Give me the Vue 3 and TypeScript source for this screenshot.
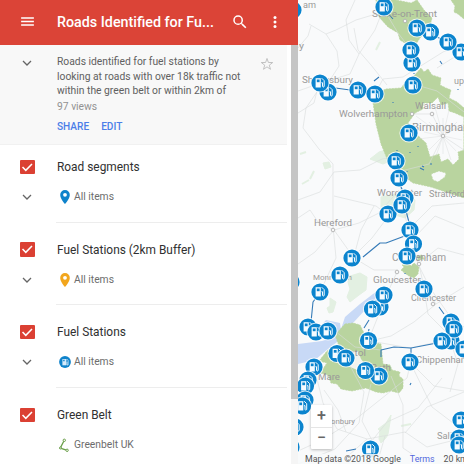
<script setup lang="ts">
interface Layer {
  title: string
  item: string
  icon: 'pin' | 'fuel' | 'line'
  color: string
}

interface Label {
  text: string
  x: number
  y: number
  width: number
  size: number
}

const layers: Layer[] = [
  { title: 'Road segments', item: 'All items', icon: 'pin', color: '#0f83cb' },
  { title: 'Fuel Stations (2km Buffer)', item: 'All items', icon: 'pin', color: '#f2a61d' },
  { title: 'Fuel Stations', item: 'All items', icon: 'fuel', color: '#0f83cb' },
  { title: 'Green Belt', item: 'Greenbelt UK', icon: 'line', color: '#6a9f49' },
]

const labels: Label[] = [
  { text: 'am', x: 303, y: 8, width: 13, size: 9 },
  { text: 'Stoke-on-Trent', x: 372, y: 17, width: 65, size: 9.5 },
  { text: 'y', x: 299, y: 49, width: 5, size: 9 },
  { text: 'Shrewsbury', x: 302, y: 83, width: 51, size: 9.5 },
  { text: 'Walsall', x: 415, y: 109, width: 31, size: 9.5 },
  { text: 'up', x: 454, y: 84, width: 10, size: 9 },
  { text: 'Wolverhampton', x: 339, y: 117, width: 69, size: 9.5 },
  { text: 'Birmingham', x: 412, y: 131, width: 61, size: 11.5 },
  { text: 'Worcester', x: 377, y: 196, width: 45, size: 9.7 },
  { text: 'Stratford', x: 429, y: 197, width: 36, size: 9 },
  { text: 'Hereford', x: 314, y: 226, width: 38, size: 9.5 },
  { text: 'Cheltenham', x: 392, y: 261, width: 54, size: 10 },
  { text: 'Gloucester', x: 373, y: 283, width: 48, size: 9.8 },
  { text: 'Monmouth', x: 313, y: 280, width: 39, size: 8 },
  { text: 'Cirencester', x: 411, y: 301, width: 45, size: 8.5 },
  { text: 'Bristol', x: 337, y: 356, width: 29, size: 9.5 },
  { text: 'Bath', x: 371, y: 371, width: 20, size: 9.5 },
  { text: 'Mare', x: 318, y: 380, width: 22, size: 9.2 },
  { text: 'Chippenham', x: 416, y: 363, width: 53, size: 9.2 },
  { text: 'onbury', x: 331, y: 424, width: 24, size: 7.8 },
  { text: 'Salisbury', x: 437, y: 439, width: 38, size: 9.5 },
]

const towns: [number, number][] = [
  [405, 21], [412, 114], [432, 114], [443, 136], [333, 230], [419, 264],
  [397, 272], [433, 304],
]

const stations: [number, number][] = [
  [293, 10], [384, 7], [430.5, 32], [417, 28], [461, 52], [448, 42], [412, 63], [411, 50],
  [413, 85], [328, 92], [320, 83], [358, 90], [375, 94], [409, 133], [396, 161],
  [399, 178], [405, 198], [388, 214], [402, 205], [410, 230], [413.5, 244], [407, 256],
  [352, 258], [340, 275], [320, 292], [424, 289], [380, 307], [384, 295], [372.5, 309],
  [291, 282], [308, 327], [316, 332], [328, 331], [451, 322], [451, 341], [454, 329],
  [442, 341], [464, 349], [368.5, 340.5], [337, 353.5], [346, 358], [410, 362], [314, 367],
  [379, 376], [365.5, 370.5], [308, 380], [305.5, 386], [305, 400], [302.5, 406], [295, 427],
  [291, 447], [370.5, 449], [461, 420], [459, 438], [459, 445],
]

const roads: string[] = [
  'M298 113l16-10 5-20M298 91l23-8 29-9 9-20-10-14-3-20 9-20',
  'M309 24l17 10 10-4 20-10 20-6M326 34l11 17 2 15-11 17',
  'M298 48l10-12 3-10M354 28l4 22 13 15 16 20M359 54l16-24 9-23',
  'M375 94l8-15 20-2 40-25 20-8M383 8l15 25 13 17M437 68l27-17',
  'M321 86l-15 22-3 20 16 21 14 15 0 62 3 32-16 34',
  'M298 200l22-8 14-20M334 172l26-2 22-11 17-3',
  'M334 230l-16-8-8-12-12 8M334 230l25-7 20-10 20-23',
  'M334 230l-19 22-17 12M334 230l20 28 20 12 24 0',
  'M334 196l42 10 12 9M374 206l-13 24-7 26M352 258l20-20 18-24',
  'M399 178l6 38 13 48 12 24 24 34 10 5',
  'M410 228l22-22 32-3M418 264l20-16 26 7M413 239l22-23 29 12',
  'M419 265l5 22 12 17 28-17M436 304l-22 18-23 14-21 5',
  'M397 272l-10 22-18 45-6 10M370 341l40 7 32-7 22 6M325 323l30 24 26 3',
  'M411 361l-4 17-21 17-30 24-36 22-22 10',
  'M346 358l18 34-5 31-24 26-37 15M324 390l14 20 8 22',
  'M314 367l9 36 14 26 30 10 38-7 22 15 32-8',
  'M391 376l12 29 0 43 24 16M410 362l24 24 30 5M410 362l22 45 29 22',
  'M367 439l-28 25M405 433l22-26 37-15M385 436l-8 28',
  'M371 384l-9 37 13 25M442 378l-24 30-31 14-20 25M424 289l4 25 20 20 10 30-8 28',
  'M464 112l-27-21-24-7M411 114l21 0 11 22 21 14M443 136l-14 28-28 7',
]

const cityRoads: string[] = [
  'M443 118v36M424 132l38 8M429 122l27 29M429 150l28-28M416 116l27 20 20-12',
  'M443 136l-8-29M443 136l6-26M443 136l-25 3M443 136l8 24M443 136l-7 20',
]

const routes: string[] = [
  'M321 86l29 4M374 81l5-4M384 9l9 10M417 28l31 14 16 10',
  'M398 179l7 18M405 207l6 23M363 257l17-14 6 0 24-9',
  'M320 292l-7 10-2 20M364 328l5-8M420 280l4 8M439 307l5 7',
  'M381 357l0-7 13-3 17 1 26-5M369 329l-2 10M411 348v14M410 385l1-2M346 451l10-2',
]
</script>

<template>
  <main class="app">
    <section class="panel">
      <header class="toolbar">
        <svg class="menu-icon" viewBox="0 0 24 24"><path d="M3 6h18v2H3zm0 5h18v2H3zm0 5h18v2H3z" /></svg>
        <h1>Roads Identified for Fu...</h1>
        <svg class="search-icon" viewBox="0 0 24 24">
          <path d="M15.5 14h-.79l-.28-.27A6.47 6.47 0 0 0 16 9.5 6.5 6.5 0 1 0 9.5 16c1.61 0 3.09-.59 4.23-1.57l.27.28v.79l5 4.99L20.49 19zm-6 0a4.5 4.5 0 1 1 0-9 4.5 4.5 0 0 1 0 9z" />
        </svg>
        <svg class="more-icon" viewBox="0 0 24 24">
          <circle cx="12" cy="6" r="2" /><circle cx="12" cy="12" r="2" /><circle cx="12" cy="18" r="2" />
        </svg>
      </header>
      <div class="panel-body">
        <div class="content">
          <div class="about">
            <svg class="chevron" viewBox="0 0 10 6"><path d="M1 1l4 4 4-4" /></svg>
            <div class="description">
              <p>Roads identified for fuel stations by<br>looking at roads with over 18k traffic not<br>within the green belt or within 2km of</p>
              <p class="views">97 views</p>
              <div class="actions"><a>SHARE</a><a>EDIT</a></div>
            </div>
            <svg class="star" viewBox="0 0 24 24">
              <path d="M12 2.5l2.4 6.9 7.4.1-5.9 4.5 2.1 7.1-6-4.2-6 4.2 2.1-7.1-5.9-4.5 7.4-.1z" />
            </svg>
          </div>
          <div v-for="layer in layers" :key="layer.title" class="layer">
            <div class="row title-row">
              <span class="checkbox"><svg viewBox="0 0 15 15"><path d="M2.6 7.3l3.4 3.4 6.4-6.5" /></svg></span>
              <h2>{{ layer.title }}</h2>
            </div>
            <div class="row item-row">
              <svg v-if="layer.icon !== 'line'" class="chevron" viewBox="0 0 10 6"><path d="M1 1l4 4 4-4" /></svg>
              <span v-else class="chevron"></span>
              <svg class="item-icon" viewBox="0 0 14 16">
                <path
                  v-if="layer.icon === 'pin'" :fill="layer.color" fill-rule="evenodd"
                  d="M7 1a4.8 4.8 0 0 0-4.8 4.9C2.2 9.5 7 15 7 15s4.8-5.5 4.8-9.1A4.8 4.8 0 0 0 7 1zm0 2.9a1.9 1.9 0 1 1 0 3.8 1.9 1.9 0 0 1 0-3.8z"
                />
                <g v-else-if="layer.icon === 'fuel'">
                  <circle cx="7" cy="8" r="5.9" :fill="layer.color" />
                  <path d="M4.4 5h4v6.3h-4z" fill="#d5eafa" /><path d="M5.2 5.8h1.4v1.5H5.2z" :fill="layer.color" />
                  <path d="M8.7 5l1.4 1.5V11H9V8" fill="none" stroke="#d5eafa" stroke-width=".8" />
                </g>
                <g v-else fill="#fff" :stroke="layer.color">
                  <path d="M6 3.8L2.2 11.1 8.5 13.2" fill="none" stroke-width="1.3" />
                  <circle cx="6.3" cy="3.3" r="1.2" /><circle cx="2.5" cy="11" r="1" /><circle cx="9.1" cy="13.3" r="1.2" />
                </g>
              </svg>
              <span class="item-name">{{ layer.item }}</span>
            </div>
          </div>
        </div>
        <div class="scroll-track"><div class="scroll-thumb"></div></div>
      </div>
    </section>
    <section class="map">
      <svg class="canvas" viewBox="298 0 166 464">
        <defs>
          <g id="station">
            <circle r="9.6" fill="#fff" opacity=".8" />
            <circle r="8.6" fill="#0b84ce" />
            <path d="M-4.4 -4.8h5.2v9.3h-5.2z" fill="#f5fbff" />
            <path d="M-3.2 -3.5h2.8v2.7h-2.8z" fill="#0b84ce" />
            <path d="M1.7 -4.8l2.5 2.5v5.8q-1.4 1.4-1.7-.2v-3.6h-1" fill="none" stroke="#f5fbff" stroke-width="1" />
          </g>
        </defs>
        <rect x="298" width="166" height="464" fill="#f9fafb" />
        <g class="woods">
          <path d="M350 276l10-3 7 4-1 13-7 5-9 7-3-5 3-8-2-7zM381 197l24-5 10 8-1 10-9 8-13-4-11-1zM370 159l9-7 7-2 4 11-7 3zM323 163l6-1 2 5-6 2zM391 415l-1 7-2 12-7-2-3-3 8-6zM380 431l8 4-3 4-4 4-2-4zM330 298l6 4-3 10-4 1-2-5 3-2z" />
          <path d="M302 184l7-4M300 154l6-2M314 171l-4 8M376 50l4-8M401 426l10-2" stroke-width="2" />
        </g>
        <path class="sea" d="M298 344l24-3 16-5 3-7 4-12 15-13 13-10 10-6-5 11-13 11-12 13-12 16-13 10-13 11-17 4zM310 338l16-18 14 3 2 15z" />
        <g class="belt">
          <path d="M376 0h20l15 3 6-3 7 10 8 8-2 8-10 12-4 6-11-1-5-3-2-7-10-6-9-10-3-9z" />
          <path d="M451 0h13v19l-6-5-4-2 1-6z" />
          <path fill-rule="evenodd" d="M372 95l14-6 15-1 4-5 8-6 8-9 3 4 4-3 4 6 9 3-1 7 6 3 5 2-2 8 8 4 7 6v90l-18-6-15-5-18-4-8-6-8-5-9-11-7-17-5-20zM415 113l8-4 0-6 9 0 6-6 3 8 7-2 1 8 6 2 9 4v33l-6 2 1 7-6 6-5-6-7 3-2-8-9 3-4-14-11-10-7-10zM431 174l8-3 7 2-1 4-7 5-5-2z" />
          <path d="M402 265l6-2 3 3 3-3 5 4-1 7-4 4-5-2-3-2-5-4 3-3zM417 256l5-1 2 4-6 1z" />
          <path d="M345 324l8-1 7 2 5 10-2 8 5 3 5-4 8 2 2 20 7 1 2 5 8 2-1 4 4 3 0 9-4 5-8-2-8 2-7-1-10-4-14 3-6-1-5-1-4-5-6-1-3-8-8-2 7-10-8-2 8-10 7-5 5 0-4-11z" />
        </g>
        <path class="town-area" d="M344 352l14-1 3 8 7 9-8 3-10-4-8-7z" />
        <path v-for="road in roads" :key="road" class="road" :d="road" />
        <path v-for="road in cityRoads" :key="road" class="road city" :d="road" />
        <path v-for="route in routes" :key="route" class="route" :d="route" />
        <path class="route" d="M393 102v1M397 150v1M410 152v1M418 146v1M420 168l4 2M422 166l2 1M430 164h2M407 171v1M414 73v1M440 61l2 3M458 89v1M451 197h1M405 273v1" />
        <circle v-for="(town, index) in towns" :key="index" class="town" :cx="town[0]" :cy="town[1]" r="1.8" />
        <text v-for="label in labels" :key="label.text" :x="label.x" :y="label.y" :font-size="label.size" :textLength="label.width" lengthAdjust="spacingAndGlyphs">{{ label.text }}</text>
        <use v-for="(station, index) in stations" :key="index" href="#station" :x="station[0]" :y="station[1]" />
      </svg>
      <div class="zoom-control"><button>+</button><button>−</button></div>
      <footer class="attribution"><span>Map data ©2018 Google</span><a>Terms</a><span>20 km</span></footer>
    </section>
  </main>
</template>

<style>
body { margin: 0; overflow: hidden; }
</style>

<style scoped>
.app { display: flex; width: 464px; height: 464px; overflow: hidden; font-family: Roboto, sans-serif; background: #fff; }
.panel { display: flex; flex: 0 0 298px; flex-direction: column; width: 298px; height: 464px; }
.toolbar { display: flex; align-items: center; box-sizing: border-box; height: 45px; padding: 0 14px 2px 19px; color: #fff; background: #db4437; }
.toolbar svg { flex: none; fill: #fff; }
.menu-icon { width: 17px; height: 17px; }
h1 { flex: 0 0 158px; min-width: 0; margin: 0 16px 0 21px; font-size: 14.3px; font-weight: 500; line-height: 20px; white-space: nowrap; }
.search-icon { width: 18px; height: 18px; margin-right: 17px; }
.more-icon { width: 18px; height: 18px; }
.panel-body { display: flex; flex: 1; min-height: 0; }
.content { width: 291px; }
.about { display: flex; box-sizing: border-box; width: 287px; height: 100px; padding: 10px 13px 0 22px; background: #f8f8f8; border-bottom: 1px solid #f1f1f1; }
.chevron { flex: none; width: 10px; height: 6px; fill: none; stroke: #656565; stroke-width: 1.3; }
.about .chevron { margin-top: 5px; }
.description { flex: 1; margin-left: 25px; color: #606060; font-size: 10.3px; line-height: 14.7px; white-space: nowrap; }
.description p { margin: 0; }
.description .views { margin-top: 1px; color: #929292; }
.actions { display: flex; gap: 12px; margin-top: 5px; color: #4b7ee8; font-size: 10.1px; font-weight: 500; }
.star { width: 14px; height: 14px; margin-top: 2px; fill: none; stroke: #bababa; stroke-width: 1.5; }
.layer { display: flex; flex-direction: column; height: 82.6px; }
.layer + .layer::before { display: block; width: 231px; height: 1px; margin: -6px 0 5px 56px; background: #ededed; content: ''; }
.row { display: flex; align-items: center; }
.title-row { height: 20px; padding: 12px 0 0 20px; }
.checkbox { display: flex; width: 14.5px; height: 14.5px; background: #db4033; border-radius: 1px; }
.checkbox svg { width: 100%; fill: none; stroke: #fff; stroke-width: 1.6; }
h2 { margin: 0 0 0 22.5px; color: #303030; font-size: 11.9px; font-weight: 400; line-height: 18px; }
.item-row { height: 18px; padding: 11px 0 0 22px; }
.item-icon { width: 14px; height: 16px; margin-left: 25.5px; }
.item-name { margin-left: 2.5px; color: #6d6d6d; font-size: 10.3px; line-height: 18px; }
.scroll-track { width: 7px; background: #f5f5f5; }
.scroll-thumb { height: 354px; background: #c5c5c5; }
.map { position: relative; flex: 1; min-width: 0; overflow: hidden; }
.canvas { display: block; width: 166px; height: 464px; }
.woods { fill: #e3f0e2; stroke: #e3f0e2; }
.sea { fill: #c8d9f6; }
.belt { fill: #b9d49f; stroke: #b9d49f; stroke-width: .7; stroke-dasharray: 2 1; }
.town-area { fill: #f1f3ee; }
.road { fill: none; stroke: #d9dbdc; stroke-opacity: .75; stroke-width: .8; stroke-linejoin: round; }
.city { stroke-width: .6; }
.route { fill: none; stroke: #367bb8; stroke-width: 1.1; stroke-linejoin: round; }
.town { fill: #f6f6f6; stroke: #aaa; stroke-width: .8; }
.canvas text { fill: #999; }
.zoom-control { position: absolute; bottom: 15px; left: 13px; display: flex; flex-direction: column; width: 21px; height: 44px; background: #fff; border-radius: 1px; box-shadow: 0 1px 3px #0004; }
.zoom-control button { flex: 1; padding: 0; color: #666; font: 500 16px/20px Roboto, sans-serif; background: none; border: 0; }
.zoom-control button + button { border-top: 1px solid #e5e5e5; }
.attribution { position: absolute; right: 0; bottom: 0; left: 0; display: flex; gap: 9px; height: 10px; padding-left: 7px; overflow: hidden; color: #555; font-size: 8.8px; line-height: 10px; white-space: nowrap; background: #f7f9fae0; }
.attribution a { color: #5267dd; }
</style>
